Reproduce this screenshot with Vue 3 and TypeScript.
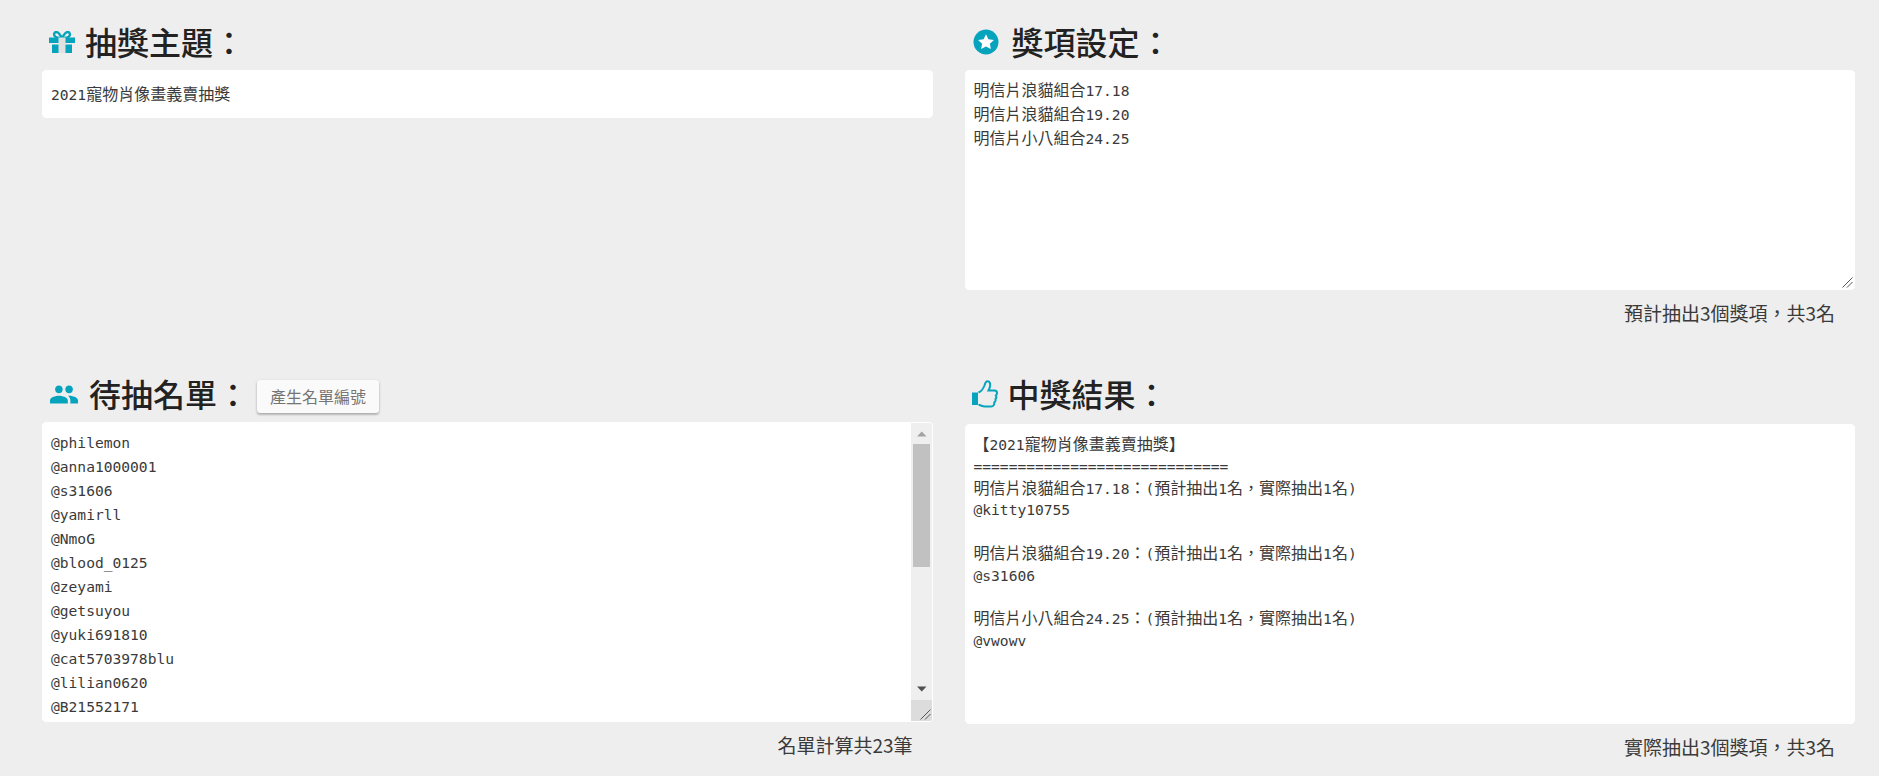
<script setup lang="ts">
type Seg = { t: string; mono: boolean }

const split = (s: string): Seg[] =>
  (s.match(/[\x20-\x7e]+|[^\x20-\x7e]+/g) ?? ['\u00a0']).map((t) => ({
    t,
    mono: /^[\x20-\x7e]/.test(t),
  }))

const topic = '2021寵物肖像畫義賣抽獎'
const prizes = ['明信片浪貓組合17.18', '明信片浪貓組合19.20', '明信片小八組合24.25']
const names = [
  '@philemon', '@anna1000001', '@s31606', '@yamirll', '@NmoG', '@blood_0125',
  '@zeyami', '@getsuyou', '@yuki691810', '@cat5703978blu', '@lilian0620', '@B21552171',
]
const results = [
  '【2021寵物肖像畫義賣抽獎】',
  '=============================',
  '明信片浪貓組合17.18：(預計抽出1名，實際抽出1名)',
  '@kitty10755',
  '',
  '明信片浪貓組合19.20：(預計抽出1名，實際抽出1名)',
  '@s31606',
  '',
  '明信片小八組合24.25：(預計抽出1名，實際抽出1名)',
  '@vwowv',
]
</script>

<template>
  <main class="page" lang="zh-Hant">
    <section class="panel">
      <h2 class="heading">
        <svg class="icon gift" viewBox="0 0 26 22" aria-hidden="true">
          <path class="bow" d="M13 7C11 3.500 9.500 1 7.500 1S4.500 3 5.500 4.800C6.200 6.200 8 7 13 7C18 7 19.800 6.200 20.500 4.800C21.500 3 20.500 1 18.500 1S15 3.500 13 7Z" />
          <rect class="fill" x="0" y="6.500" width="26" height="5.500" />
          <rect class="fill" x="3" y="13.500" width="20" height="8.500" />
          <rect class="ribbon" x="9.500" y="6.500" width="7" height="15.500" />
        </svg>
        <span class="title">抽獎主題：</span>
      </h2>
      <div class="box topic">
        <span v-for="(s, i) in split(topic)" :key="i" :class="{ mono: s.mono }">{{ s.t }}</span>
      </div>
    </section>

    <section class="panel">
      <h2 class="heading">
        <svg class="icon star" viewBox="0 0 26 26" aria-hidden="true">
          <circle class="fill" cx="13" cy="13" r="12.500" />
          <path fill="#fff" d="M13 5.200l2.400 5 5.500.700-4 3.800 1 5.400-4.900-2.700-4.900 2.700 1-5.400-4-3.800 5.500-.700z" />
        </svg>
        <span class="title">獎項設定：</span>
      </h2>
      <div class="box prizes">
        <div v-for="line in prizes" :key="line" class="line24">
          <span v-for="(s, i) in split(line)" :key="i" :class="{ mono: s.mono }">{{ s.t }}</span>
        </div>
        <svg class="grip" viewBox="0 0 11 11" aria-hidden="true">
          <path d="M0.500 10.500L10.500 .5M5 10.500L10.500 5" />
        </svg>
      </div>
      <p class="note">預計抽出3個獎項，共3名</p>
    </section>

    <section class="panel">
      <h2 class="heading">
        <svg class="icon people" viewBox="1 5 22 14" aria-hidden="true">
          <path class="fill" d="M16 11c1.660 0 2.990-1.340 2.990-3S17.660 5 16 5c-1.660 0-3 1.340-3 3s1.340 3 3 3zm-8 0c1.660 0 2.990-1.340 2.990-3S9.660 5 8 5C6.340 5 5 6.340 5 8s1.340 3 3 3zm0 2c-2.330 0-7 1.170-7 3.500V19h14v-2.500c0-2.330-4.670-3.500-7-3.500zm8 0c-.290 0-.620.020-.970.050 1.160.840 1.970 1.970 1.970 3.450V19h6v-2.500c0-2.330-4.670-3.500-7-3.500z" />
        </svg>
        <span class="title">待抽名單：</span>
        <button class="gen" type="button">產生名單編號</button>
      </h2>
      <div class="box list">
        <div v-for="n in names" :key="n" class="line24 mono">{{ n }}</div>
        <div class="scrollbar" aria-hidden="true">
          <div class="sb-btn"><svg viewBox="0 0 21 21"><path class="arrow-up" d="M6 13.500h9.500l-4.750-5z" /></svg></div>
          <div class="sb-track"><div class="sb-thumb"></div></div>
          <div class="sb-btn"><svg viewBox="0 0 21 21"><path class="arrow-down" d="M6 7.500h9.500l-4.750 5z" /></svg></div>
          <div class="sb-corner">
            <svg class="grip corner-grip" viewBox="0 0 11 11"><path d="M0.500 10.500L10.500 .5M5 10.500L10.500 5" /></svg>
          </div>
        </div>
      </div>
      <p class="note">名單計算共23筆</p>
    </section>

    <section class="panel">
      <h2 class="heading result-heading">
        <svg class="icon thumb" viewBox="0 0 26 28" aria-hidden="true">
          <path class="outline" d="M6.500 12.500C9 11.500 11.500 8 12.500 5.500C13 3.500 13.500 1.200 15.500 1.200C18 1.200 18.500 3.800 18 6.500C17.700 8 17 9.500 16.500 10.500H22.500C24.200 10.500 25 11.800 25 13C25 14 24.500 15 23.800 15.500C24.500 16.500 24.500 18 23.500 19C23.800 20.200 23.500 21.500 22.300 22.300C22.500 24.500 21.500 26.500 19 26.500H13C10 26.500 8.500 25 6.500 24.800" />
          <rect class="fill" x="0" y="12.500" width="6" height="12.500" />
        </svg>
        <span class="title">中獎結果：</span>
      </h2>
      <div class="box result">
        <div v-for="(line, n) in results" :key="n" class="line22">
          <span v-for="(s, i) in split(line)" :key="i" :class="{ mono: s.mono }">{{ s.t }}</span>
        </div>
      </div>
      <p class="note">實際抽出3個獎項，共3名</p>
    </section>
  </main>
</template>

<style>
html,
body {
  margin: 0;
  background: #eee;
}
</style>

<style scoped>
.page {
  display: grid;
  grid-template-columns: 1fr 1fr;
  grid-template-rows: 352px auto;
  column-gap: 32px;
  box-sizing: border-box;
  height: 776px;
  padding: 18px 24px 0 42px;
  overflow: hidden;
  background: #eee;
  color: #3a3a3a;
  font-family: "Noto Sans CJK TC", "Noto Sans", sans-serif;
  font-size: 16px;
}
.panel {
  min-width: 0;
}
.heading {
  display: flex;
  align-items: center;
  height: 52px;
  margin: 0;
  color: #222;
  font-size: 32px;
  font-weight: 500;
  line-height: 40px;
  white-space: nowrap;
}
.title {
  margin-top: -7px;
}
.result-heading {
  margin-bottom: 2px;
}
.icon {
  flex: none;
  display: block;
}
.fill {
  fill: #06a3bd;
}
.ribbon {
  fill: #e0e0e0;
}
.bow,
.outline {
  fill: none;
  stroke: #06a3bd;
}
.bow {
  stroke-width: 2.400;
}
.outline {
  stroke-width: 2;
}
.gift {
  width: 26px;
  height: 22px;
  margin: -4px 10px 0 7px;
}
.star {
  width: 26px;
  height: 26px;
  margin: -4px 13px 0 8px;
}
.people {
  width: 28px;
  height: 19px;
  margin: -3px 11px 0 8px;
}
.thumb {
  width: 26px;
  height: 28px;
  margin: -5px 10px 0 7px;
}
.gen {
  height: 33px;
  width: 122px;
  margin-left: 8px;
  padding: 0;
  border: 0;
  border-radius: 3px;
  background: #fafafa;
  box-shadow: 0 2px 2px rgba(0, 0, 0, 0.14), 0 1px 3px rgba(0, 0, 0, 0.2);
  color: #757575;
  font-family: inherit;
  font-size: 16px;
  line-height: 33px;
}
.box {
  position: relative;
  box-sizing: border-box;
  border: 1px solid #fff;
  border-radius: 4px;
  background: #fff;
  padding: 0 8px;
  white-space: pre;
}
.mono {
  font-family: "DejaVu Sans Mono", "Liberation Mono", monospace;
  font-size: 14.600px;
}
.line24 {
  height: 24px;
  line-height: 24px;
}
.line22 {
  height: 21.800px;
  line-height: 21.800px;
}
.topic {
  height: 48px;
  line-height: 42px;
  padding-top: 1px;
}
.prizes {
  height: 220px;
  padding-top: 6px;
}
.grip {
  position: absolute;
  right: 1px;
  bottom: 1px;
  width: 11px;
  height: 11px;
}
.grip path {
  fill: none;
  stroke: #555;
  stroke-width: 1;
}
.list {
  height: 300px;
  padding-top: 8px;
  overflow: hidden;
}
.scrollbar {
  position: absolute;
  top: 0;
  right: 0;
  bottom: 0;
  display: flex;
  flex-direction: column;
  width: 21px;
  background: #efefef;
}
.sb-btn {
  flex: none;
  height: 21px;
}
.sb-btn svg {
  display: block;
  width: 21px;
  height: 21px;
}
.arrow-up {
  fill: #a3a3a3;
}
.arrow-down {
  fill: #505050;
}
.sb-track {
  flex: 1;
}
.sb-thumb {
  height: 123px;
  margin: 0 2px;
  background: #c1c1c1;
}
.sb-corner {
  position: relative;
  flex: none;
  height: 21px;
  background: #dcdcdc;
}
.result {
  height: 300px;
  padding-top: 8px;
  overflow: hidden;
}
.note {
  box-sizing: border-box;
  height: 34px;
  margin: 0;
  padding: 9px 20px 0 0;
  text-align: right;
  font-size: 19px;
  line-height: 28px;
}
</style>
